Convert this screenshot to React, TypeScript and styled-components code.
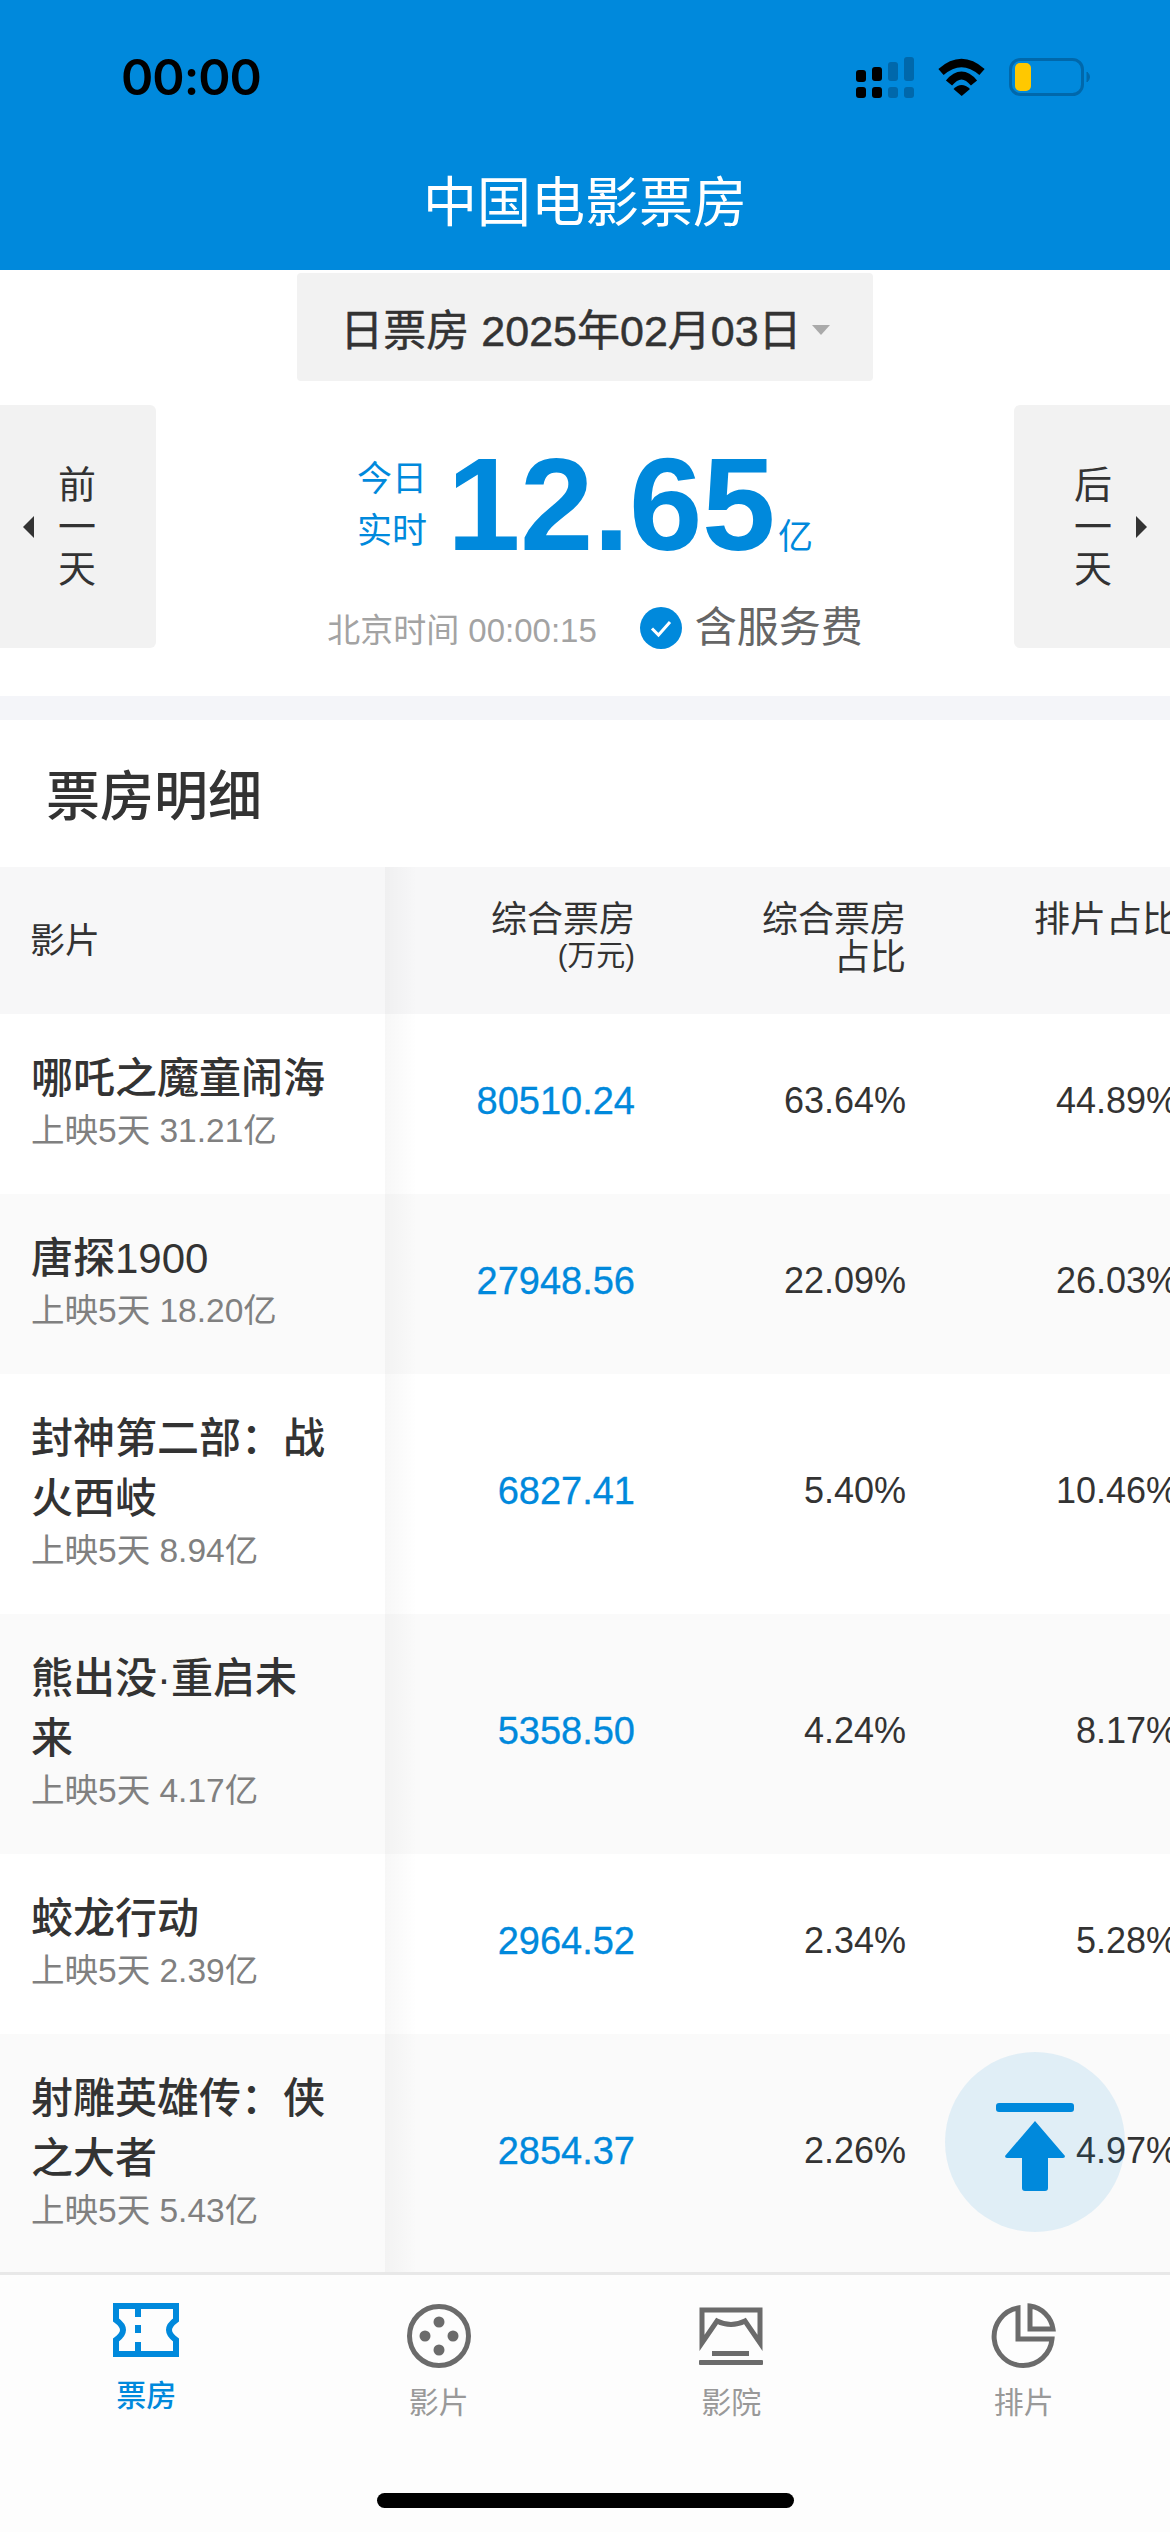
import React from "react";
import styled, { createGlobalStyle } from "styled-components";

const BLUE = "#0089dc";

const Global = createGlobalStyle`
  html, body { margin: 0; padding: 0; background: #fff; }
  body { font-family: "Liberation Sans", "Noto Sans CJK SC", sans-serif; color: #333; }
  * { box-sizing: border-box; }
`;

const Page = styled.div`
  position: relative;
  width: 1170px;
  height: 2532px;
  overflow: hidden;
  display: flex;
  flex-direction: column;
  background: #fff;
`;

const Header = styled.header`
  height: 270px;
  background: ${BLUE};
  display: flex;
  flex-direction: column;
`;

const StatusBar = styled.div`
  height: 163px;
  padding: 50px 74px 0 121px;
  display: flex;
  justify-content: space-between;
  align-items: flex-start;
`;

const Clock = styled.div`
  font-family: Inter, "Liberation Sans", sans-serif;
  font-weight: 600;
  font-size: 49px;
  letter-spacing: -1px;
  line-height: 56px;
  color: #000;
`;

const StatusIcons = styled.svg`
  width: 240px;
  height: 50px;
  margin-top: 6px;
`;

const Title = styled.h1`
  margin: 0;
  text-align: center;
  font-weight: 400;
  font-size: 54px;
  line-height: 80px;
  color: #fff;
`;

const PickerRow = styled.div`
  display: flex;
  justify-content: center;
  padding-top: 3px;
`;

const Picker = styled.div`
  width: 576px;
  height: 108px;
  background: #f2f2f2;
  border-radius: 4px;
  display: flex;
  align-items: center;
  justify-content: center;
  gap: 10px;
  font-size: 43px;
  color: #333;
  -webkit-text-stroke: 0.5px #333;
`;

const Caret = styled.span`
  width: 0;
  height: 0;
  margin-top: 6px;
  border-left: 9px solid transparent;
  border-right: 9px solid transparent;
  border-top: 10px solid #aaa;
`;

const Summary = styled.section`
  height: 243px;
  margin-top: 24px;
  display: flex;
  justify-content: space-between;
`;

const DayButton = styled.div<{ $side: "left" | "right" }>`
  width: 156px;
  background: #f2f2f2;
  border-radius: ${(p) => (p.$side === "left" ? "0 6px 6px 0" : "6px 0 0 6px")};
  display: flex;
  flex-direction: ${(p) => (p.$side === "left" ? "row" : "row-reverse")};
  align-items: center;
  gap: 24px;
  padding: 0 23px;
`;

const DayArrow = styled.span<{ $side: "left" | "right" }>`
  width: 0;
  height: 0;
  border-top: 11px solid transparent;
  border-bottom: 11px solid transparent;
  ${(p) => (p.$side === "left" ? "border-right: 11px solid #333;" : "border-left: 11px solid #333;")}
`;

const DayText = styled.div`
  width: 38px;
  font-size: 38px;
  line-height: 42px;
  text-align: center;
  color: #333;
`;

const Center = styled.div`
  flex: 1;
  display: flex;
  flex-direction: column;
  align-items: center;
`;

const Figure = styled.div`
  display: flex;
  align-items: flex-end;
  height: 130px;
  margin-top: 35px;
`;

const FigureLabel = styled.div`
  width: 72px;
  margin-right: 18px;
  margin-bottom: 13px;
  font-size: 35px;
  line-height: 52px;
  color: ${BLUE};
`;

const FigureValue = styled.div`
  font-size: 132px;
  font-weight: 700;
  line-height: 130px;
  color: ${BLUE};
  letter-spacing: -0.5px;
`;

const FigureUnit = styled.div`
  font-size: 35px;
  line-height: 40px;
  margin-left: 3px;
  margin-bottom: 13px;
  color: ${BLUE};
`;

const MetaRow = styled.div`
  display: flex;
  align-items: center;
  margin-top: 35px;
  margin-left: 20px;
`;

const BeijingTime = styled.div`
  font-size: 33px;
  line-height: 40px;
  margin-top: 6px;
  color: #a3a3a3;
  margin-right: 43px;
`;

const FeeCheck = styled.svg`
  width: 42px;
  height: 42px;
  margin-right: 13px;
`;

const FeeText = styled.div`
  font-size: 42px;
  line-height: 44px;
  color: #666;
`;

const Divider = styled.div`
  height: 24px;
  margin-top: 48px;
  background: #f4f5f9;
`;

const SectionTitle = styled.h2`
  margin: 0;
  height: 147px;
  padding: 47px 0 0 46px;
  font-size: 54px;
  line-height: 60px;
  font-weight: 500;
  color: #333;
`;

const Table = styled.div`
  flex: 1;
  width: 1170px;
  overflow: hidden;
  display: flex;
  flex-direction: column;
`;

const Row = styled.div<{ $tall?: boolean; $tone: "white" | "soft" | "head" }>`
  flex: none;
  width: 1178px;
  height: ${(p) => (p.$tall ? 240 : 180)}px;
  display: flex;
  align-items: center;
  background: ${(p) => (p.$tone === "white" ? "#fff" : p.$tone === "soft" ? "#fafafa" : "#f7f7f8")};
`;

const HeadRow = styled(Row)`
  height: 147px;
`;

const NameCell = styled.div`
  position: relative;
  flex: none;
  width: 385px;
  height: 100%;
  padding: 0 50px 6px 31px;
  display: flex;
  flex-direction: column;
  justify-content: center;

  &::after {
    content: "";
    position: absolute;
    top: 0;
    bottom: 0;
    left: 100%;
    width: 32px;
    background: linear-gradient(to right, rgba(0, 0, 0, 0.03), rgba(0, 0, 0, 0));
  }
`;

const HeadName = styled.div`
  font-size: 35px;
  line-height: 40px;
  margin-top: 6px;
  margin-left: -1px;
  color: #333;
`;

const FilmName = styled.div`
  font-size: 42px;
  line-height: 60px;
  font-weight: 500;
  color: #333;
`;

const FilmMeta = styled.div`
  font-size: 33.5px;
  line-height: 44px;
  color: #808080;
`;

const NumCell = styled.div<{ $w: number; $blue?: boolean }>`
  flex: none;
  width: ${(p) => p.$w}px;
  margin-top: -6px;
  text-align: right;
  font-size: 36px;
  line-height: 40px;
  color: ${(p) => (p.$blue ? BLUE : "#333")};
`;

const BlueValue = styled.span`
  font-size: 38px;
  -webkit-text-stroke: 0.3px ${BLUE};
`;

const HeadCell = styled.div<{ $w: number }>`
  flex: none;
  width: ${(p) => p.$w}px;
  align-self: flex-start;
  padding-top: 34px;
  text-align: right;
  font-size: 36px;
  line-height: 38px;
  color: #333;
  white-space: nowrap;
`;

const HeadUnit = styled.div`
  font-size: 29px;
  line-height: 34px;
`;

const TabBar = styled.nav`
  flex: none;
  height: 260px;
  background: #fdfdfd;
  border-top: 3px solid #e8e8e8;
  display: flex;
  flex-direction: column;
`;

const Tabs = styled.div`
  height: 218px;
  padding: 28px 0 0 0;
  display: grid;
  grid-template-columns: repeat(4, 292.5px);
`;

const Tab = styled.div<{ $active?: boolean }>`
  display: flex;
  flex-direction: column;
  align-items: center;
  font-size: 30px;
  line-height: 36px;
  gap: ${(p) => (p.$active ? 21 : 16)}px;
  color: ${(p) => (p.$active ? BLUE : "#999")};
  font-weight: ${(p) => (p.$active ? 500 : 400)};
`;

const TabIcon = styled.svg<{ $h?: number }>`
  width: 68px;
  height: ${(p) => p.$h ?? 66}px;
`;

const HomeBar = styled.div`
  width: 417px;
  height: 15px;
  margin: 0 auto;
  border-radius: 8px;
  background: #000;
`;

const ScrollTop = styled.div`
  position: absolute;
  left: 945px;
  top: 2052px;
  width: 180px;
  height: 180px;
  border-radius: 50%;
  background: rgba(0, 137, 220, 0.1);
  display: flex;
  align-items: center;
  justify-content: center;
`;

const ScrollIcon = styled.svg`
  width: 180px;
  height: 180px;
`;

type Film = { name: string; meta: string; box: string; share: string; slot: string; tall?: boolean };

const films: Film[] = [
  { name: "哪吒之魔童闹海", meta: "上映5天 31.21亿", box: "80510.24", share: "63.64%", slot: "44.89%" },
  { name: "唐探1900", meta: "上映5天 18.20亿", box: "27948.56", share: "22.09%", slot: "26.03%" },
  { name: "封神第二部：战火西岐", meta: "上映5天 8.94亿", box: "6827.41", share: "5.40%", slot: "10.46%", tall: true },
  { name: "熊出没·重启未来", meta: "上映5天 4.17亿", box: "5358.50", share: "4.24%", slot: "8.17%", tall: true },
  { name: "蛟龙行动", meta: "上映5天 2.39亿", box: "2964.52", share: "2.34%", slot: "5.28%" },
  { name: "射雕英雄传：侠之大者", meta: "上映5天 5.43亿", box: "2854.37", share: "2.26%", slot: "4.97%", tall: true },
];

const COLS = [250, 271, 272];

export default function App() {
  return (
    <Page>
      <Global />
      <Header>
        <StatusBar>
          <Clock>00:00</Clock>
          <StatusIcons viewBox="0 0 240 50">
            <g fill="#000">
              <rect x="0" y="14" width="10" height="12" rx="3" />
              <rect x="0" y="31" width="10" height="11" rx="3" />
              <rect x="16" y="11" width="10" height="14" rx="3" />
              <rect x="16" y="31" width="10" height="11" rx="3" />
            </g>
            <g fill="#0068ab">
              <rect x="32" y="6" width="10" height="19" rx="3" />
              <rect x="32" y="31" width="10" height="11" rx="3" />
              <rect x="48" y="1" width="10" height="24" rx="3" />
              <rect x="48" y="31" width="10" height="11" rx="3" />
            </g>
            <path d="M85 16 Q105.5 -2 126 16" fill="none" stroke="#000" strokeWidth="8" />
            <path d="M93 27 Q105.5 12 118 27" fill="none" stroke="#000" strokeWidth="8" />
            <path d="M97.5 33 Q105.5 25 114 33 L105.7 40 Z" fill="#000" />
            <rect x="154.5" y="3.5" width="72" height="35" rx="10" fill="none" stroke="#0068ab" strokeWidth="3" />
            <rect x="159" y="7" width="16" height="28" rx="5" fill="#ffc800" />
            <path d="M231 16 Q236 21 231 26 Z" fill="#0068ab" stroke="#0068ab" strokeWidth="1" />
          </StatusIcons>
        </StatusBar>
        <Title>中国电影票房</Title>
      </Header>

      <PickerRow>
        <Picker>
          <span>日票房 2025年02月03日</span>
          <Caret />
        </Picker>
      </PickerRow>

      <Summary>
        <DayButton $side="left">
          <DayArrow $side="left" />
          <DayText>前一天</DayText>
        </DayButton>
        <Center>
          <Figure>
            <FigureLabel>今日实时</FigureLabel>
            <FigureValue>12.65</FigureValue>
            <FigureUnit>亿</FigureUnit>
          </Figure>
          <MetaRow>
            <BeijingTime>北京时间 00:00:15</BeijingTime>
            <FeeCheck viewBox="0 0 42 42">
              <circle cx="21" cy="21" r="21" fill={BLUE} />
              <path d="M12 21.5 L18.5 28 L30 15" fill="none" stroke="#fff" strokeWidth="3" />
            </FeeCheck>
            <FeeText>含服务费</FeeText>
          </MetaRow>
        </Center>
        <DayButton $side="right">
          <DayArrow $side="right" />
          <DayText>后一天</DayText>
        </DayButton>
      </Summary>

      <Divider />
      <SectionTitle>票房明细</SectionTitle>

      <Table>
        <HeadRow $tone="head">
          <NameCell>
            <HeadName>影片</HeadName>
          </NameCell>
          <HeadCell $w={COLS[0]}>
            综合票房
            <HeadUnit>(万元)</HeadUnit>
          </HeadCell>
          <HeadCell $w={COLS[1]}>
            综合票房
            <div>占比</div>
          </HeadCell>
          <HeadCell $w={COLS[2]}>排片占比</HeadCell>
        </HeadRow>
        {films.map((f, i) => (
          <Row key={f.name} $tall={f.tall} $tone={i % 2 === 0 ? "white" : "soft"}>
            <NameCell>
              <FilmName>{f.name}</FilmName>
              <FilmMeta>{f.meta}</FilmMeta>
            </NameCell>
            <NumCell $w={COLS[0]} $blue>
              <BlueValue>{f.box}</BlueValue>
            </NumCell>
            <NumCell $w={COLS[1]}>{f.share}</NumCell>
            <NumCell $w={COLS[2]}>{f.slot}</NumCell>
          </Row>
        ))}
      </Table>

      <TabBar>
        <Tabs>
          <Tab $active>
            <TabIcon viewBox="0 0 66 54" $h={54}>
              <path d="M3 3 H63 V17 Q49 27 63 37 V51 H3 V37 Q17 27 3 17 Z" fill="none" stroke={BLUE} strokeWidth="6" />
              <g fill={BLUE}>
                <rect x="22" y="0" width="6" height="14" />
                <rect x="22" y="22" width="6" height="8" />
                <rect x="22" y="39" width="6" height="15" />
              </g>
            </TabIcon>
            票房
          </Tab>
          <Tab>
            <TabIcon viewBox="0 0 68 66">
              <circle cx="34" cy="33" r="29.5" fill="none" stroke="#6b6b6b" strokeWidth="5" />
              <g fill="#6b6b6b">
                <circle cx="34" cy="19" r="5.5" />
                <circle cx="34" cy="47" r="5.5" />
                <circle cx="20" cy="33" r="5.5" />
                <circle cx="48" cy="33" r="5.5" />
              </g>
            </TabIcon>
            影片
          </Tab>
          <Tab>
            <TabIcon viewBox="-2 -4 68 66">
              <path d="M3 3 H61 V36 L46 14 Q32 21 18 14 L3 36 Z" fill="none" stroke="#6b6b6b" strokeWidth="5" />
              <rect x="13" y="44" width="37" height="5" fill="#6b6b6b" />
              <rect x="0" y="53" width="64" height="5" rx="1" fill="#6b6b6b" />
            </TabIcon>
            影院
          </Tab>
          <Tab>
            <TabIcon viewBox="0 0 68 66">
              <path d="M28 5 A29 29 0 1 0 62 36 L28 36 Z" fill="none" stroke="#6b6b6b" strokeWidth="5" />
              <path d="M40 3 A27 27 0 0 1 63 26 H40 Z" fill="none" stroke="#6b6b6b" strokeWidth="5" />
            </TabIcon>
            排片
          </Tab>
        </Tabs>
        <HomeBar />
      </TabBar>

      <ScrollTop>
        <ScrollIcon viewBox="0 0 180 180">
          <rect x="51" y="51" width="78" height="9" rx="3" fill={BLUE} />
          <path
            d="M90 69 L120 104 Q120 106 118 106 H103 V136 Q103 139 100 139 H80 Q77 139 77 136 V106 H62 Q60 106 60 104 Z"
            fill={BLUE}
          />
        </ScrollIcon>
      </ScrollTop>
    </Page>
  );
}
